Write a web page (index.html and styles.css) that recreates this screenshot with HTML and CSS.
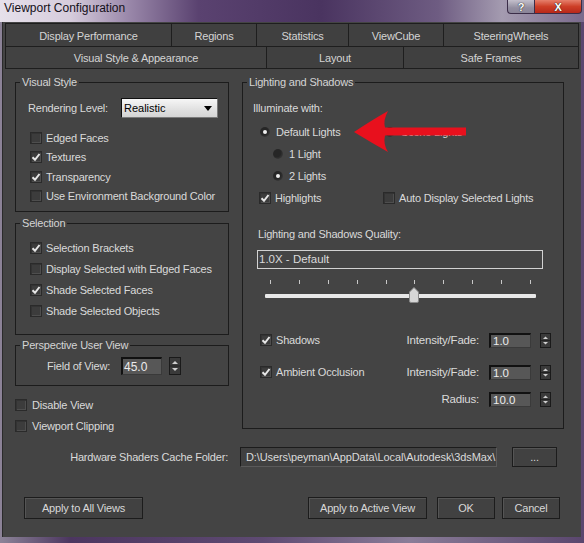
FILE: index.html
```html
<!DOCTYPE html>
<html>
<head>
<meta charset="utf-8">
<title>Viewport Configuration</title>
<link rel="stylesheet" href="styles.css">
</head>
<body>
<div class="window">
  <div class="titlebar">
    <span class="title">Viewport Configuration</span>
    <div class="caption-btns">
      <span class="cbtn help">?</span>
      <span class="cbtn close">X</span>
    </div>
  </div>
  <div class="body">
    <div class="tabs">
      <div class="tabrow row1">
        <div class="tab">Display Performance</div>
        <div class="tab">Regions</div>
        <div class="tab">Statistics</div>
        <div class="tab">ViewCube</div>
        <div class="tab">SteeringWheels</div>
      </div>
      <div class="tabrow row2">
        <div class="tab active">Visual Style &amp; Appearance</div>
        <div class="tab">Layout</div>
        <div class="tab">Safe Frames</div>
      </div>
    </div>

    <div class="content">
      <div class="leftcol">
        <fieldset class="group vs">
          <legend>Visual Style</legend>
          <div class="gbody">
            <div class="render-row">
              <span class="rlabel">Rendering Level:</span>
              <div class="select"><span>Realistic</span>
                <svg class="sel-arrow" width="8" height="5" viewBox="0 0 8 5"><path d="M0 0H8L4 5Z" fill="#000"/></svg>
              </div>
            </div>
            <div class="checks tight">
              <div class="opt"><span class="cb"></span>Edged Faces</div>
              <div class="opt"><span class="cb"><svg width="10" height="10" viewBox="0 0 10 10"><path d="M1.5 5.2L4 7.8L8.5 2" fill="none" stroke="#e6e6e6" stroke-width="2"/></svg></span>Textures</div>
              <div class="opt"><span class="cb"><svg width="10" height="10" viewBox="0 0 10 10"><path d="M1.5 5.2L4 7.8L8.5 2" fill="none" stroke="#e6e6e6" stroke-width="2"/></svg></span>Transparency</div>
              <div class="opt"><span class="cb"></span>Use Environment Background Color</div>
            </div>
          </div>
        </fieldset>

        <fieldset class="group sel">
          <legend>Selection</legend>
          <div class="gbody">
            <div class="checks">
              <div class="opt"><span class="cb"><svg width="10" height="10" viewBox="0 0 10 10"><path d="M1.5 5.2L4 7.8L8.5 2" fill="none" stroke="#e6e6e6" stroke-width="2"/></svg></span>Selection Brackets</div>
              <div class="opt"><span class="cb"></span>Display Selected with Edged Faces</div>
              <div class="opt"><span class="cb"><svg width="10" height="10" viewBox="0 0 10 10"><path d="M1.5 5.2L4 7.8L8.5 2" fill="none" stroke="#e6e6e6" stroke-width="2"/></svg></span>Shade Selected Faces</div>
              <div class="opt"><span class="cb"></span>Shade Selected Objects</div>
            </div>
          </div>
        </fieldset>

        <fieldset class="group persp">
          <legend>Perspective User View</legend>
          <div class="gbody">
            <div class="fov-row">
              <span class="fov-label">Field of View:</span>
              <span class="num big">45.0</span>
              <span class="spin big">
                <svg width="10" height="16" viewBox="0 0 10 16"><path d="M2 6H8L5 3Z" fill="#cfcfcf"/><path d="M0 8H10" stroke="#222" stroke-width="1"/><path d="M2 10H8L5 13Z" fill="#cfcfcf"/></svg>
              </span>
            </div>
          </div>
        </fieldset>

        <div class="checks bottom-checks">
          <div class="opt"><span class="cb"></span>Disable View</div>
          <div class="opt"><span class="cb"></span>Viewport Clipping</div>
        </div>
      </div>

      <fieldset class="group lights">
        <legend>Lighting and Shadows</legend>
        <div class="gbody">
          <div class="illum">Illuminate with:</div>
          <div class="radios">
            <div class="rrow first">
              <div class="ritem w1"><span class="radio on"></span>Default Lights</div>
              <div class="ritem"><span class="radio"></span>Scene Lights</div>
              <svg class="arrow" width="120" height="48" viewBox="0 0 120 48"><path d="M4 24Q22 12 38 3Q33 12 35 19.5L116 19.5L116 27.5L35 27.5Q33 36 38 44Q22 35 4 24Z" fill="#e8101d"/></svg>
            </div>
            <div class="rrow sub"><div class="ritem"><span class="radio"></span>1 Light</div></div>
            <div class="rrow sub"><div class="ritem"><span class="radio on"></span>2 Lights</div></div>
            <div class="rrow hl">
              <div class="ritem w2 cbitem"><span class="cb"><svg width="10" height="10" viewBox="0 0 10 10"><path d="M1.5 5.2L4 7.8L8.5 2" fill="none" stroke="#e6e6e6" stroke-width="2"/></svg></span>Highlights</div>
              <div class="ritem cbitem"><span class="cb"></span>Auto Display Selected Lights</div>
            </div>
          </div>
          <div class="qlabel">Lighting and Shadows Quality:</div>
          <div class="qbox">1.0X - Default</div>
          <div class="slider">
            <div class="ticks"><i></i><i></i><i></i><i></i><i></i><i></i><i></i><i></i><i></i><i></i></div>
            <div class="track">
              <svg class="thumb" style="left:144px" width="10" height="16" viewBox="0 0 10 16"><path d="M0.5 5L5 0.5L9.5 5V14Q9.5 15.5 8 15.5H2Q0.5 15.5 0.5 14Z" fill="#d6d6d6" stroke="#8a8a8a"/></svg>
            </div>
          </div>
          <div class="srow r1">
            <div class="ritem cbitem"><span class="cb"><svg width="10" height="10" viewBox="0 0 10 10"><path d="M1.5 5.2L4 7.8L8.5 2" fill="none" stroke="#e6e6e6" stroke-width="2"/></svg></span>Shadows</div>
            <span class="slabel">Intensity/Fade:</span>
            <span class="num small">1.0</span>
            <span class="spin small"><svg width="9" height="13" viewBox="0 0 9 13"><path d="M2 5H7L4.5 2.5Z" fill="#cfcfcf"/><path d="M0 6.5H9" stroke="#222"/><path d="M2 8H7L4.5 10.5Z" fill="#cfcfcf"/></svg></span>
          </div>
          <div class="srow r2">
            <div class="ritem cbitem"><span class="cb"><svg width="10" height="10" viewBox="0 0 10 10"><path d="M1.5 5.2L4 7.8L8.5 2" fill="none" stroke="#e6e6e6" stroke-width="2"/></svg></span>Ambient Occlusion</div>
            <span class="slabel">Intensity/Fade:</span>
            <span class="num small">1.0</span>
            <span class="spin small"><svg width="9" height="13" viewBox="0 0 9 13"><path d="M2 5H7L4.5 2.5Z" fill="#cfcfcf"/><path d="M0 6.5H9" stroke="#222"/><path d="M2 8H7L4.5 10.5Z" fill="#cfcfcf"/></svg></span>
          </div>
          <div class="srow r3">
            <span></span>
            <span class="slabel">Radius:</span>
            <span class="num small">10.0</span>
            <span class="spin small"><svg width="9" height="13" viewBox="0 0 9 13"><path d="M2 5H7L4.5 2.5Z" fill="#cfcfcf"/><path d="M0 6.5H9" stroke="#222"/><path d="M2 8H7L4.5 10.5Z" fill="#cfcfcf"/></svg></span>
          </div>
        </div>
      </fieldset>
    </div>

    <div class="cache">
      <span class="cache-label">Hardware Shaders Cache Folder:</span>
      <div class="path">D:\Users\peyman\AppData\Local\Autodesk\3dsMax\</div>
      <div class="btn browse">...</div>
    </div>

    <div class="actions">
      <div class="btn wide">Apply to All Views</div>
      <div class="spacer"></div>
      <div class="btn wide">Apply to Active View</div>
      <div class="btn narrow ok">OK</div>
      <div class="btn narrow cancel">Cancel</div>
    </div>
  </div>
</div>
</body>
</html>
```

FILE: styles.css
```css
* { box-sizing: border-box; }
html, body { margin: 0; padding: 0; }
body {
  width: 584px;
  height: 543px;
  overflow: hidden;
  font-family: "Liberation Sans", Arial, sans-serif;
  font-size: 11px;
  letter-spacing: -0.2px;
  color: #dadada;
  background: #4a3a5c;
}

.window {
  width: 584px;
  height: 543px;
  display: flex;
  flex-direction: column;
  background: linear-gradient(to right, #8d8398 0%, #8a8196 0.5%, #4c3660 12%, #5e4a72 45%, #8a7d98 70%, #5a466e 100%);
}

.titlebar {
  height: 22px;
  flex: none;
  display: flex;
  align-items: flex-start;
  background: linear-gradient(to right, #e6e0ea 0%, #d6ccdc 12%, #9a88aa 22%, #5a4270 34%, #4a3460 55%, #6e5c82 75%, #a49bb0 86%, #7a6a8c 100%);
}
.title {
  font-size: 12px;
  letter-spacing: 0;
  color: #141018;
  padding: 1px 0 0 4px;
  line-height: 15px;
}
.caption-btns {
  margin-left: auto;
  margin-right: 2px;
  display: flex;
}
.cbtn {
  height: 14px;
  display: flex;
  align-items: center;
  justify-content: center;
  border: 1px solid #3b2d48;
  border-top: none;
  font-weight: bold;
  font-size: 11px;
  line-height: 12px;
  color: #fff;
  text-shadow: 0 0 1px #222, 0 0 1px #222;
}
.help {
  width: 27px;
  border-radius: 0 0 0 4px;
  background: linear-gradient(#c4c0cc, #938ea0 60%, #8a8498);
  border-right: none;
}
.close {
  width: 48px;
  border-radius: 0 0 4px 0;
  background: linear-gradient(#e6806c, #cd3f27 50%, #b8281a);
}

.body {
  margin-left: 2px;
  width: 579px;
  height: 515px;
  flex: none;
  background: #444444;
  display: flex;
  flex-direction: column;
  border-left: 1px solid #2a2a2a;
}

/* Tabs */
.tabs {
  margin: 1px 0 0 2px;
  width: 574px;
  border-left: 1px solid #1e1e1e;
  border-top: 1px solid #1e1e1e;
}
.tabrow { display: grid; }
.row1 { grid-template-columns: 166px 85px 92px 95px 135px; height: 23px; }
.row2 { grid-template-columns: 261px 137px 175px; height: 22px; }
.tab {
  display: flex;
  align-items: center;
  justify-content: center;
  background: #404040;
  border-right: 1px solid #1e1e1e;
  border-bottom: 1px solid #1e1e1e;
  color: #d4d4d4;
  padding-top: 2px;
}
.row2 .tab { padding-top: 1px; }
.tab.active { background: #424242; }

/* Content */
.content {
  display: flex;
  align-items: flex-start;
  gap: 13px;
  padding: 7px 0 0 12px;
}
.leftcol {
  width: 214px;
  display: flex;
  flex-direction: column;
}
fieldset.group {
  margin: 0;
  padding: 0;
  min-width: 0;
  border: 1px solid #1c1c1c;
}
fieldset.group legend {
  padding: 0 2px;
  margin-left: 4px;
  line-height: 13px;
  color: #d4d4d4;
}
.vs .gbody { padding: 9px 0 5px 14px; }
.sel { margin-top: 5px !important; }
.sel .gbody { padding: 7px 0 13px 14px; }
.persp { margin-top: 4px !important; }
.persp .gbody { padding: 5px 0 10px 31px; }

.render-row {
  display: flex;
  align-items: center;
  height: 20px;
  margin-left: -2px;
}
.rlabel { width: 93px; }
.select {
  width: 97px;
  height: 20px;
  display: flex;
  align-items: center;
  padding-left: 2px;
  color: #000;
  letter-spacing: 0;
  background: linear-gradient(#f6f6f6, #e0e0e0 60%, #d4d4d4);
  border: 1px solid #101010;
  border-right-color: #7a7a7a;
  border-bottom-color: #7a7a7a;
}
.sel-arrow { margin-left: auto; margin-right: 5px; }

.checks { display: flex; flex-direction: column; }
.checks.tight { margin-top: 10px; }
.checks.tight .opt { height: 19.5px; }
.opt {
  height: 21px;
  display: flex;
  align-items: center;
  gap: 4px;
  white-space: nowrap;
}
.bottom-checks { margin-top: 8px; }
.bottom-checks .opt { gap: 5px; }

.cb {
  width: 12px;
  height: 12px;
  flex: none;
  display: flex;
  align-items: center;
  justify-content: center;
  background: #3c3c3c;
  border: 1px solid #2a2a2a;
  box-shadow: inset 1px 1px 0 #333, inset -1px -1px 0 #4e4e4e;
}

.fov-row { display: flex; align-items: center; height: 18px; }
.fov-label { width: 74px; }
.num {
  display: flex;
  align-items: center;
  background: #575757;
  border-top: 2px solid #111;
  border-left: 2px solid #111;
  border-right: 1px solid #3a3a3a;
  border-bottom: 1px solid #3a3a3a;
  color: #ececec;
  letter-spacing: 0;
}
.num.big { width: 41px; height: 18px; padding-left: 1px; font-size: 12px; }
.spin {
  display: flex;
  align-items: center;
  justify-content: center;
  background: #3a3a3a;
  border: 1px solid #1a1a1a;
}
.spin.big { width: 12px; height: 18px; margin-left: 7px; }

/* Right group */
.lights { width: 322px; }
.lights legend { margin-left: 5px; }
.lights .gbody { padding: 12px 0 19px 10px; }
.illum { line-height: 14px; }
.radios { margin-top: 6px; }
.rrow {
  display: flex;
  align-items: center;
  height: 22px;
  position: relative;
}
.rrow.first { margin-left: 7px; }
.rrow.sub { margin-left: 20px; }
.rrow.hl { margin-left: 6px; }
.ritem {
  display: flex;
  align-items: center;
  gap: 6px;
  white-space: nowrap;
}
.ritem.cbitem { gap: 4px; }
.ritem.w1 { width: 125px; }
.ritem.w2 { width: 124px; }
.radio {
  width: 10px;
  height: 10px;
  flex: none;
  border-radius: 50%;
  display: flex;
  align-items: center;
  justify-content: center;
  background: radial-gradient(circle at 40% 40%, #262626 45%, #3a3a3a 75%, #707070 100%);
}
.radio.on::after {
  content: "";
  width: 4px;
  height: 4px;
  border-radius: 50%;
  background: #f0f0f0;
}
.arrow {
  position: absolute;
  left: 90px;
  top: -13px;
}

.qlabel { margin-top: 18px; margin-left: 5px; line-height: 14px; }
.qbox {
  margin-top: 9px;
  margin-left: 4px;
  width: 286px;
  height: 19px;
  border: 1px solid #d2d2d2;
  padding-left: 1px;
  line-height: 17px;
  font-size: 11.5px;
  letter-spacing: 0;
}
.slider { margin-top: 11px; margin-left: 12px; width: 271px; }
.ticks {
  display: flex;
  justify-content: space-between;
  margin: 2px 5px 0 5px;
  height: 4px;
}
.ticks i { display: block; width: 1px; height: 4px; background: #c8c8c8; }
.track {
  position: relative;
  margin-top: 10px;
  height: 4px;
  background: #e8e8e8;
  border-radius: 1px;
}
.thumb { position: absolute; top: -7px; }

.srow {
  display: grid;
  grid-template-columns: 142px 87px 51px 11px;
  align-items: center;
  height: 20px;
  margin-left: 7px;
}
.srow.r1 { margin-top: 32px; }
.srow.r2 { margin-top: 12px; }
.srow.r3 { margin-top: 7px; }
.slabel { text-align: right; padding-right: 10px; white-space: nowrap; font-size: 11.5px; }
.num.small { width: 42px; height: 15px; padding-left: 2px; font-size: 11.5px; }
.spin.small { width: 11px; height: 15px; }

/* Cache row */
.cache {
  display: flex;
  align-items: center;
  margin-top: 11px;
  height: 20px;
}
.cache-label { width: 225px; text-align: right; margin-right: 12px; white-space: nowrap; }
.path {
  width: 257px;
  height: 20px;
  line-height: 18px;
  padding-left: 5px;
  white-space: nowrap;
  overflow: hidden;
  background: #404040;
  border: 1px solid #1c1c1c;
  border-right-color: #5a5a5a;
  border-bottom-color: #5a5a5a;
  letter-spacing: -0.1px;
}
.btn {
  height: 22px;
  display: flex;
  align-items: center;
  justify-content: center;
  background: #414141;
  border: 1px solid #1c1c1c;
  box-shadow: inset 1px 1px 0 #555;
  color: #d8d8d8;
  white-space: nowrap;
}
.browse { width: 45px; height: 20px; margin-left: 15px; }

.actions {
  display: flex;
  margin-top: 30px;
  padding: 0 21px;
}
.spacer { flex: 1; }
.btn.wide { width: 119px; }
.btn.narrow { width: 58px; }
.ok { margin-left: 10px; }
.cancel { margin-left: 7px; }
```
